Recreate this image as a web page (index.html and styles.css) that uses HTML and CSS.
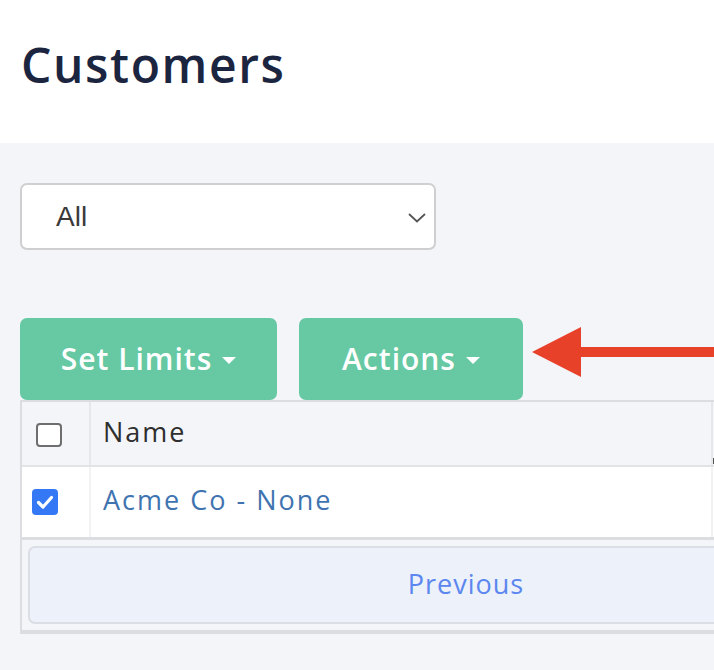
FILE: index.html
```html
<!DOCTYPE html>
<html>
<head>
<meta charset="utf-8">
<link rel="stylesheet" href="styles.css">
</head>
<body>
<header class="page-header">
  <h1 class="title">Customers</h1>
</header>
<main class="content">
  <div class="select">
    <span class="select-value">All</span>
    <svg class="chevron" width="18" height="10" viewBox="0 0 18 10"><path d="M1 1 L9 8.5 L17 1" fill="none" stroke="#555" stroke-width="1.8"/></svg>
  </div>
  <div class="toolbar">
    <button class="btn btn-limits">Set Limits <span class="caret"></span></button>
    <button class="btn btn-actions">Actions <span class="caret"></span></button>
    <div class="arrow">
      <svg width="182" height="52" viewBox="0 0 182 52"><polygon points="0,25 49,0 49,50" fill="#e8412a"/><rect x="48" y="20" width="134" height="10" fill="#e8412a"/></svg>
    </div>
  </div>
  <div class="table">
    <div class="row row-head">
      <div class="cell cell-check"><span class="checkbox"></span></div>
      <div class="cell cell-name">Name</div>
      <div class="cell cell-rest"><span class="handle"></span></div>
    </div>
    <div class="row row-body">
      <div class="cell cell-check"><span class="checkbox checked"><svg width="26" height="26" viewBox="0 0 26 26"><path d="M6.5 13.5 L11 18 L19.5 8.5" fill="none" stroke="#fff" stroke-width="3.2" stroke-linecap="round" stroke-linejoin="round"/></svg></span></div>
      <div class="cell cell-name"><a class="link">Acme Co - None</a></div>
      <div class="cell cell-rest"></div>
    </div>
    <div class="table-footer">
      <button class="pager">Previous</button>
    </div>
  </div>
</main>
</body>
</html>
```
FILE: styles.css
```css
html, body {
  margin: 0;
  padding: 0;
  overflow: hidden;
  background: #f4f5f9;
}
body {
  width: 714px;
  height: 670px;
  font-family: "Open Sans", "Noto Sans", sans-serif;
}
.page-header {
  background: #fff;
  height: 143px;
  padding: 0 21px;
  box-sizing: border-box;
}
.title {
  margin: 0;
  padding-top: 32px;
  font-size: 48px;
  line-height: 66px;
  font-weight: 600;
  color: #1c2540;
  letter-spacing: 1.6px;
}
.content {
  padding: 40px 0 0 20px;
}
.select {
  width: 416px;
  height: 67px;
  box-sizing: border-box;
  border: 2px solid #cfcfd1;
  border-radius: 7px;
  background: #fff;
  display: flex;
  align-items: center;
  justify-content: space-between;
  padding: 0 8px 0 34px;
}
.select-value {
  font-family: "Liberation Sans", Arial, sans-serif;
  font-size: 28px;
  color: #3a3a3a;
}
.chevron {
  margin-top: 2px;
}
.toolbar {
  margin-top: 68px;
  display: flex;
  align-items: center;
  gap: 22px;
  height: 82px;
}
.btn {
  height: 82px;
  border: none;
  border-radius: 7px;
  background: #66c9a3;
  color: #fff;
  font-family: "Open Sans", sans-serif;
  font-weight: 600;
  font-size: 30px;
  letter-spacing: 1px;
  display: flex;
  align-items: center;
  justify-content: center;
  gap: 10px;
  padding: 0 0 2px;
}
.btn-limits { width: 257px; }
.btn-actions { width: 224px; }
.caret {
  width: 0;
  height: 0;
  border-left: 7px solid transparent;
  border-right: 7px solid transparent;
  border-top: 7px solid #fff;
  margin-top: 4px;
}
.arrow {
  margin-left: -13px;
  display: flex;
  margin-top: -12px;
}
.arrow svg { display: block; }
.table {
  width: 900px;
  border: 2px solid #dcdde1;
  border-right: none;
  box-sizing: border-box;
}
.row {
  display: flex;
}
.row-head {
  height: 63px;
  background: #f4f5f9;
  border-bottom: 2px solid #e2e3e7;
}
.row-body {
  height: 70px;
  background: #fff;
  border-bottom: 3px solid #dcdde1;
}
.cell {
  display: flex;
  align-items: center;
  box-sizing: border-box;
}
.cell-check {
  width: 69px;
  border-right: 2px solid #e6e7ea;
  padding-left: 14px;
}
.row-body .cell-check {
  border-right-color: #f1f2f4;
  padding-left: 10px;
}
.cell-name {
  width: 622px;
  padding-left: 12px;
  padding-bottom: 4px;
  border-right: 2px solid #e6e7ea;
  font-size: 27px;
  letter-spacing: 2px;
  color: #2e2e2e;
}
.row-body .cell-name {
  border-right-color: #f1f2f4;
  padding-bottom: 5px;
}
.cell-rest {
  flex: 1;
  position: relative;
}
.handle {
  position: absolute;
  left: 0;
  top: 56px;
  width: 3px;
  height: 6px;
  background: #555;
}
.checkbox {
  width: 26px;
  height: 24px;
  box-sizing: border-box;
  border: 2px solid #6e6e6e;
  border-radius: 4px;
  background: #fff;
  display: block;
  margin-top: 2px;
}
.checkbox.checked {
  width: 26px;
  height: 26px;
  background: #3478f6;
  border: none;
  border-radius: 4px;
  margin-top: 0;
}
.checkbox.checked svg { display: block; }
.link {
  color: #3f74b1;
  font-size: 27px;
  letter-spacing: 2px;
}
.table-footer {
  height: 92px;
  background: #f4f5f9;
  border-bottom: 2px solid #dcdde1;
  padding: 6px;
  box-sizing: border-box;
}
.pager {
  width: 876px;
  height: 78px;
  border: 2px solid #dbdee4;
  border-radius: 7px;
  background: #ecf1fa;
  color: #5b87ef;
  font-family: "Open Sans", sans-serif;
  font-size: 27px;
  letter-spacing: 1px;
  padding-bottom: 5px;
  display: block;
}
```
